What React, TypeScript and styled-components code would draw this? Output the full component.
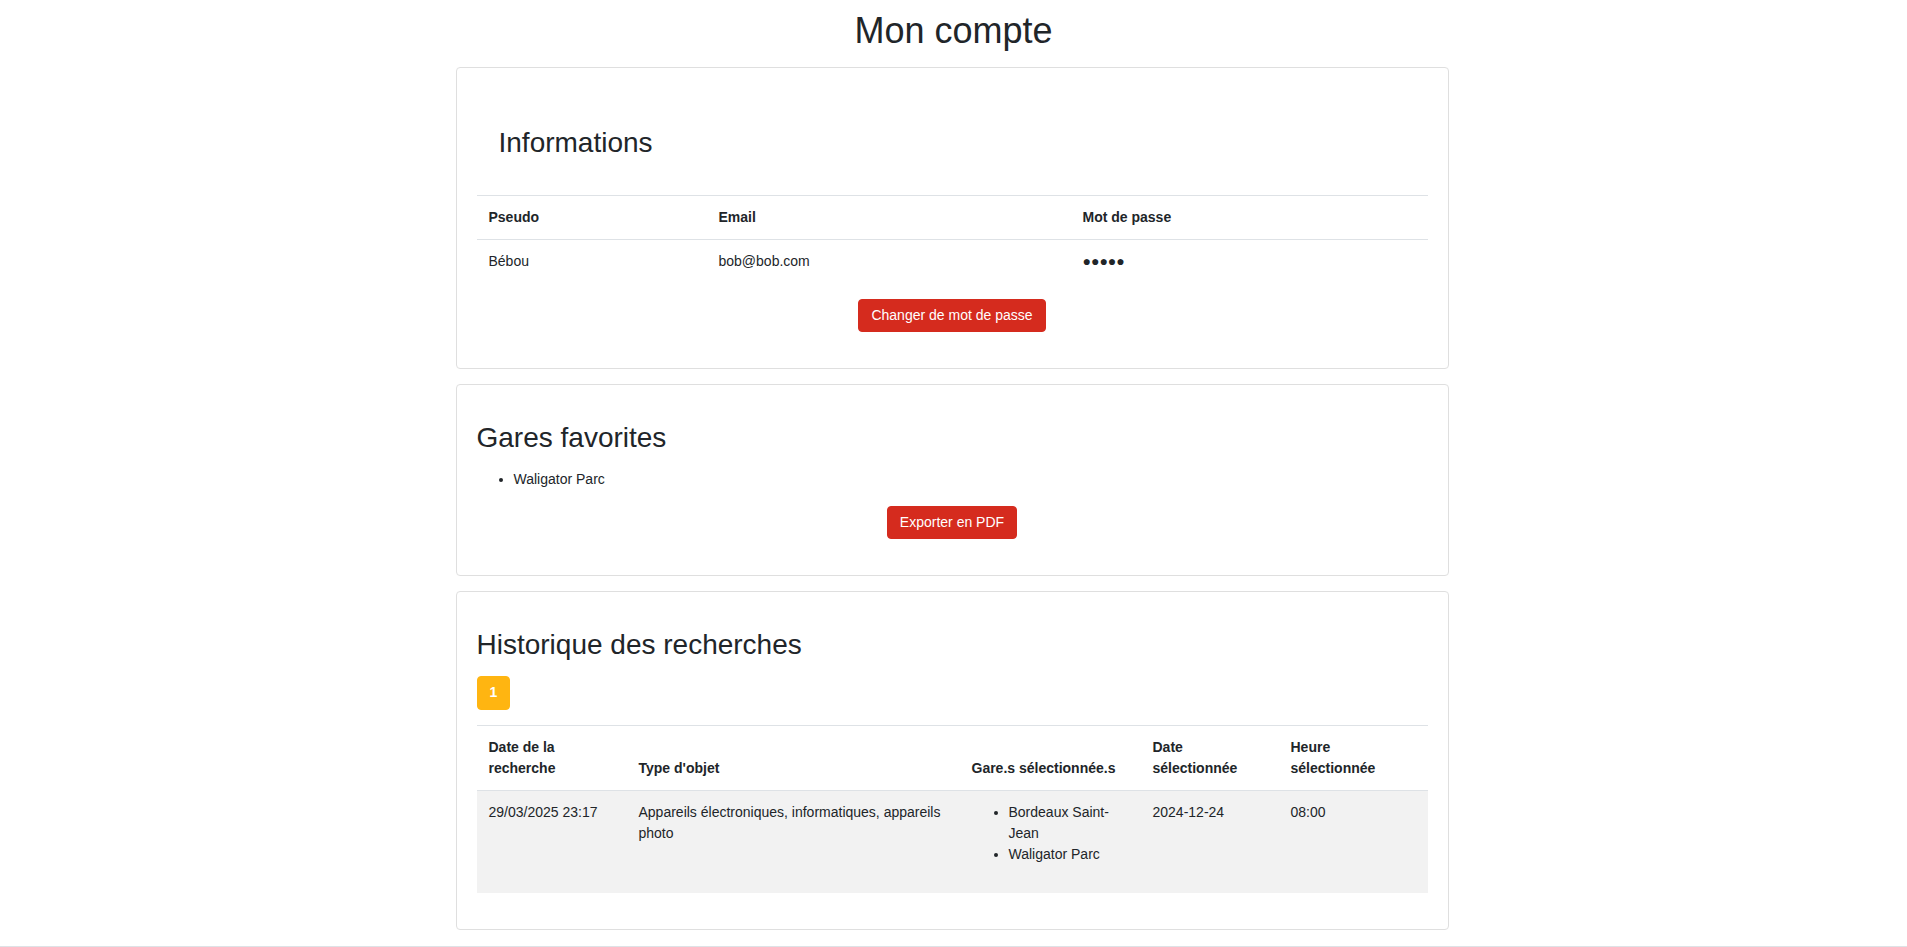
import React from "react";
import styled, { createGlobalStyle } from "styled-components";

const GlobalStyle = createGlobalStyle`
  html, body {
    margin: 0;
    padding: 0;
    background: #ffffff;
  }
  body {
    font-family: "Liberation Sans", Arial, Helvetica, sans-serif;
    font-size: 14px;
    line-height: 1.5;
    color: #212529;
  }
  * { box-sizing: border-box; }
`;

const Page = styled.div`
  display: flex;
  flex-direction: column;
`;

const PageTitle = styled.h1`
  margin: 9px 0 15px;
  font-size: 36px;
  font-weight: 500;
  line-height: 1.2;
  text-align: center;
  color: #212529;
`;

const CardStack = styled.main`
  width: 993px;
  margin: 0 0 0 calc(50% - 498px);
  display: flex;
  flex-direction: column;
  gap: 15px;
`;

const Card = styled.section`
  border: 1px solid #dfdfdf;
  border-radius: 4px;
  background: #fff;
  padding: 20px;
  display: flex;
  flex-direction: column;
`;

const InfoHeader = styled.div`
  padding: 22px 22px 20px;
`;

const SectionTitle = styled.h2<{ $top?: number; $bottom?: number }>`
  margin: ${(p) => p.$top ?? 16}px 0 ${(p) => p.$bottom ?? 15}px;
  font-size: 28px;
  font-weight: 500;
  line-height: 1.2;
  color: #212529;
`;

const DataTable = styled.table`
  width: 100%;
  border-collapse: collapse;
  table-layout: fixed;
  margin-bottom: 16px;
  color: #212529;
`;

const HeadCell = styled.th`
  text-align: left;
  font-weight: 700;
  vertical-align: bottom;
  padding: 11px 12px;
  line-height: 21px;
  border-top: 1px solid #dee2e6;
  border-bottom: 1px solid #dee2e6;
`;

const BodyRow = styled.tr<{ $striped?: boolean }>`
  background: ${(p) => (p.$striped ? "#f2f2f2" : "transparent")};
`;

const BodyCell = styled.td`
  vertical-align: top;
  padding: 11px 12px;
  line-height: 21px;
  border-top: 1px solid #dee2e6;
`;

const ListCell = styled(BodyCell)`
  padding-bottom: 12px;
`;

const ButtonRow = styled.div`
  display: flex;
  justify-content: center;
  margin-bottom: 16px;
`;

const ActionButton = styled.button`
  font-family: inherit;
  font-size: 14px;
  line-height: 21px;
  padding: 5px 12px;
  color: #ffffff;
  background: #d52b1e;
  border: 1px solid #d52b1e;
  border-radius: 4px;
  cursor: pointer;
`;

const BulletList = styled.ul`
  margin: 0 0 16px;
  padding-left: 37px;
  line-height: 21px;
`;

const Pager = styled.div`
  display: flex;
  margin-bottom: 15px;
`;

const PageButton = styled.button`
  font-family: inherit;
  font-size: 14px;
  font-weight: 700;
  line-height: 21px;
  padding: 5.5px 12px;
  color: #ffffff;
  background: #ffb511;
  border: 1px solid #ffb511;
  border-radius: 4px;
  min-width: 32px;
`;

const Footer = styled.footer`
  margin-top: 16px;
  border-top: 1px solid #dee2e6;
  height: 1px;
`;

export default function App() {
  return (
    <>
      <GlobalStyle />
      <Page>
        <PageTitle>Mon compte</PageTitle>
        <CardStack>
          <Card>
            <InfoHeader>
              <SectionTitle $top={16}>Informations</SectionTitle>
            </InfoHeader>
            <DataTable>
              <colgroup>
                <col style={{ width: 230 }} />
                <col style={{ width: 364 }} />
                <col />
              </colgroup>
              <thead>
                <tr>
                  <HeadCell>Pseudo</HeadCell>
                  <HeadCell>Email</HeadCell>
                  <HeadCell>Mot de passe</HeadCell>
                </tr>
              </thead>
              <tbody>
                <BodyRow>
                  <BodyCell>Bébou</BodyCell>
                  <BodyCell>bob@bob.com</BodyCell>
                  <BodyCell>●●●●●</BodyCell>
                </BodyRow>
              </tbody>
            </DataTable>
            <ButtonRow>
              <ActionButton>Changer de mot de passe</ActionButton>
            </ButtonRow>
          </Card>

          <Card>
            <SectionTitle $top={16}>Gares favorites</SectionTitle>
            <BulletList>
              <li>Waligator Parc</li>
            </BulletList>
            <ButtonRow>
              <ActionButton>Exporter en PDF</ActionButton>
            </ButtonRow>
          </Card>

          <Card>
            <SectionTitle $top={16} $bottom={14}>
              Historique des recherches
            </SectionTitle>
            <Pager>
              <PageButton>1</PageButton>
            </Pager>
            <DataTable>
              <colgroup>
                <col style={{ width: 150 }} />
                <col style={{ width: 333 }} />
                <col style={{ width: 181 }} />
                <col style={{ width: 138 }} />
                <col />
              </colgroup>
              <thead>
                <tr>
                  <HeadCell>Date de la recherche</HeadCell>
                  <HeadCell>Type d'objet</HeadCell>
                  <HeadCell>Gare.s sélectionnée.s</HeadCell>
                  <HeadCell>Date sélectionnée</HeadCell>
                  <HeadCell>Heure sélectionnée</HeadCell>
                </tr>
              </thead>
              <tbody>
                <BodyRow $striped>
                  <BodyCell>29/03/2025 23:17</BodyCell>
                  <BodyCell>
                    Appareils électroniques, informatiques, appareils photo
                  </BodyCell>
                  <ListCell>
                    <BulletList>
                      <li>Bordeaux Saint-Jean</li>
                      <li>Waligator Parc</li>
                    </BulletList>
                  </ListCell>
                  <BodyCell>2024-12-24</BodyCell>
                  <BodyCell>08:00</BodyCell>
                </BodyRow>
              </tbody>
            </DataTable>
          </Card>
        </CardStack>
        <Footer />
      </Page>
    </>
  );
}
